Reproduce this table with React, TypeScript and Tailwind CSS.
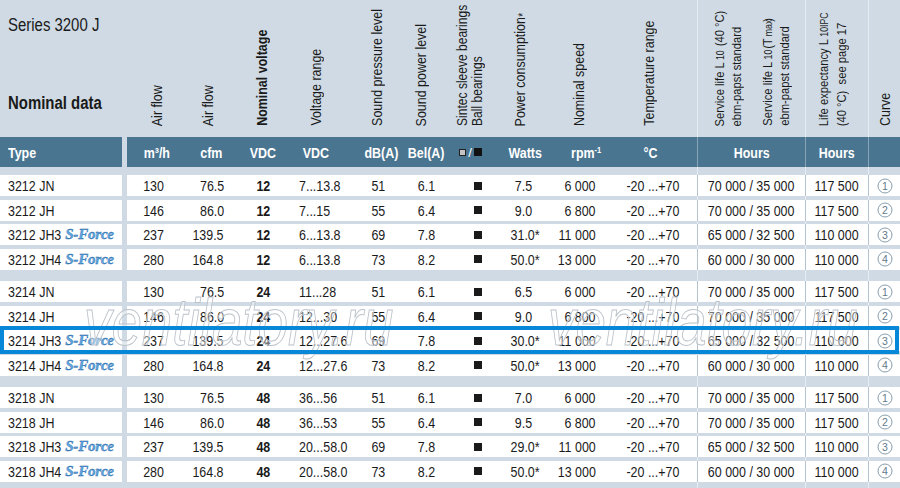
import React from "react";

const COLS =
  "grid grid-cols-[55px_56px_50px_64px_52px_44px_52px_50px_70px_77px_108px_63px_32px]";

type Row = [string, boolean, string, string, string, string, string, string, string, string, string, number];

const groups: { v: string; rows: Row[] }[] = [
  {
    v: "12",
    rows: [
      ["3212 JN", false, "130", "76.5", "7...13.8", "51", "6.1", "7.5", "6 000", "70 000 / 35 000", "117 500", 1],
      ["3212 JH", false, "146", "86.0", "7...15", "55", "6.4", "9.0", "6 800", "70 000 / 35 000", "117 500", 2],
      ["3212 JH3", true, "237", "139.5", "6...13.8", "69", "7.8", "31.0*", "11 000", "65 000 / 32 500", "110 000", 3],
      ["3212 JH4", true, "280", "164.8", "6...13.8", "73", "8.2", "50.0*", "13 000", "60 000 / 30 000", "110 000", 4],
    ],
  },
  {
    v: "24",
    rows: [
      ["3214 JN", false, "130", "76.5", "11...28", "51", "6.1", "6.5", "6 000", "70 000 / 35 000", "117 500", 1],
      ["3214 JH", false, "146", "86.0", "12...30", "55", "6.4", "9.0", "6 800", "70 000 / 35 000", "117 500", 2],
      ["3214 JH3", true, "237", "139.5", "12...27.6", "69", "7.8", "30.0*", "11 000", "65 000 / 32 500", "110 000", 3],
      ["3214 JH4", true, "280", "164.8", "12...27.6", "73", "8.2", "50.0*", "13 000", "60 000 / 30 000", "110 000", 4],
    ],
  },
  {
    v: "48",
    rows: [
      ["3218 JN", false, "130", "76.5", "36...56", "51", "6.1", "7.0", "6 000", "70 000 / 35 000", "117 500", 1],
      ["3218 JH", false, "146", "86.0", "36...53", "55", "6.4", "9.5", "6 800", "70 000 / 35 000", "117 500", 2],
      ["3218 JH3", true, "237", "139.5", "20...58.0", "69", "7.8", "29.0*", "11 000", "65 000 / 32 500", "110 000", 3],
      ["3218 JH4", true, "280", "164.8", "20...58.0", "73", "8.2", "50.0*", "13 000", "60 000 / 30 000", "110 000", 4],
    ],
  },
];

/* condensed text: horizontally squeezed span */
function C({ children, o = "c" }: { children: React.ReactNode; o?: "c" | "l" | "r" }) {
  const origin = o === "l" ? "origin-left" : o === "r" ? "origin-right" : "origin-center";
  return <span className={"inline-block whitespace-nowrap scale-x-[0.83] " + origin}>{children}</span>;
}

function Circled({ n }: { n: number }) {
  return (
    <svg width="16" height="16" viewBox="0 0 16 16">
      <circle cx="8" cy="8" r="7" fill="none" stroke="#7b93a5" strokeWidth="0.9" />
      <text
        x="8"
        y="11.6"
        textAnchor="middle"
        fontSize="10.5"
        fill="#5f7a8e"
        fontFamily="Liberation Sans, sans-serif"
      >
        {n}
      </text>
    </svg>
  );
}

function SForce() {
  return (
    <span className="ml-[-7px] italic font-bold [font-family:'Liberation_Serif',serif] text-[15px] text-[#62a7de] tracking-[-0.2px] [-webkit-text-stroke:0.35px_#1f64a6]">
      S-Force
    </span>
  );
}

/* vertical (bottom-to-top) label, condensed along its reading direction */
function V({ children, className = "" }: { children: React.ReactNode; className?: string }) {
  return (
    <div className="scale-y-[0.83] origin-bottom">
      <div className={"[writing-mode:vertical-rl] rotate-180 whitespace-nowrap " + className}>{children}</div>
    </div>
  );
}

function DataRow({ r, v }: { r: Row; v: string }) {
  const watts = r[7];
  const star = watts.endsWith("*");
  const w = star ? watts.slice(0, -1) : watts;
  return (
    <div className="flex h-[21px]">
      <div className="w-[122px] bg-white flex items-center pl-[8px] whitespace-nowrap">
        <C o="l">{r[0]}</C>
        {r[1] && <SForce />}
      </div>
      <div className="w-[5px]" />
      <div className={COLS + " flex-1 bg-white"}>
        <div className="flex items-center justify-center pr-[2px]"><C>{r[2]}</C></div>
        <div className="flex items-center justify-end pr-[14px]"><C o="r">{r[3]}</C></div>
        <div className="flex items-center justify-center font-bold"><C>{v}</C></div>
        <div className="flex items-center pl-[11px]"><C o="l">{r[4]}</C></div>
        <div className="flex items-center justify-center"><C>{r[5]}</C></div>
        <div className="flex items-center justify-center"><C>{r[6]}</C></div>
        <div className="flex items-center justify-center pl-[8px]">
          <div className="w-[8px] h-[8px] bg-[#1a1a1a]" />
        </div>
        <div className="flex items-center justify-center pr-[3px]">
          <C>
            {w}
            {star && <span className="mr-[-5px]">*</span>}
          </C>
        </div>
        <div className="flex items-center justify-end pr-[24px]"><C o="r">{r[8]}</C></div>
        <div className="flex items-center justify-center pr-[12px]"><C>-20 ...+70</C></div>
        <div className="flex items-center justify-center border-l border-[#b4c3cf]"><C>{r[9]}</C></div>
        <div className="flex items-center justify-center border-l border-[#b4c3cf]"><C>{r[10]}</C></div>
        <div className="flex items-center justify-center border-l border-[#b4c3cf] pl-[1px]">
          <Circled n={r[11]} />
        </div>
      </div>
    </div>
  );
}

export default function App() {
  return (
    <div className="relative w-[900px] h-[488px] overflow-hidden bg-[#cfdae4] bg-[linear-gradient(90deg,transparent_697px,#e6edf2_697px,#e6edf2_698px,transparent_698px,transparent_805px,#e6edf2_805px,#e6edf2_806px,transparent_806px,transparent_868px,#e6edf2_868px,#e6edf2_869px,transparent_869px)] [font-family:'Liberation_Sans',Arial,sans-serif] text-[15px] text-[#1a1a1a] leading-none">
      {/* top heading area */}
      <div className="flex h-[137px]">
        <div className="w-[127px] flex flex-col pl-[8px] pt-[15px]">
          <div className="text-[18px] leading-[20px]"><C o="l">Series 3200 J</C></div>
          <div className="mt-[58px] text-[18px] leading-[20px] font-bold"><C o="l">Nominal data</C></div>
        </div>
        <div className={COLS + " grid-rows-[137px] flex-1 text-[15px] leading-[15px]"}>
          <div className="flex items-end justify-center pb-[11px] pl-[4px]"><V>Air flow</V></div>
          <div className="flex items-end justify-center pb-[11px] pr-[6px]"><V>Air flow</V></div>
          <div className="flex items-end justify-center pb-[11px] pr-[4px]"><V className="font-bold">Nominal voltage</V></div>
          <div className="flex items-end justify-center pb-[11px] pr-[10px]"><V>Voltage range</V></div>
          <div className="flex items-end justify-center pb-[11px] pr-[4px]"><V>Sound pressure level</V></div>
          <div className="flex items-end justify-center pb-[11px] pr-[11px]"><V>Sound power level</V></div>
          <div className="flex items-end justify-center pb-[11px] pr-[9px]">
            <V className="leading-[14.5px] text-[14.5px]">
              Sintec sleeve bearings
              <br />
              Ball bearings
            </V>
          </div>
          <div className="flex items-end justify-center pb-[11px] pr-[10px]">
            <V>
              Power consumption<span className="text-[12px] relative left-[-3px]">*</span>
            </V>
          </div>
          <div className="flex items-end justify-center pb-[11px] pr-[14px]"><V>Nominal speed</V></div>
          <div className="flex items-end justify-center pb-[11px] pr-[20px]"><V>Temperature range</V></div>
          <div className="flex items-end justify-center gap-[14px] pb-[11px] pl-[1px]">
            <V className="leading-[17px] text-[13.5px]">
              Service life L<sub className="text-[10.5px]">10</sub>&nbsp; (40 °C)
              <br />
              ebm-papst standard
            </V>
            <V className="leading-[17px] text-[13.5px]">
              Service life L<sub className="text-[10.5px]">10</sub> (T<sub className="text-[10.5px]">max</sub>)
              <br />
              ebm-papst standard
            </V>
          </div>
          <div className="flex items-end justify-center pb-[11px] pr-[7px]">
            <V className="leading-[18px] text-[13.5px]">
              Life expectancy L<sub className="text-[10.5px]">10IPC</sub>
              <br />
              (40 °C)&nbsp; see page 17
            </V>
          </div>
          <div className="flex items-end justify-center pb-[11px] pl-[1px]"><V>Curve</V></div>
        </div>
      </div>

      {/* dark header band */}
      <div className="flex h-[30px] text-white font-bold text-[15px]">
        <div className="w-[122px] bg-[#4a7590] flex items-center pl-[8px]"><C o="l">Type</C></div>
        <div className="w-[5px]" />
        <div className={COLS + " flex-1 bg-[#4a7590]"}>
          <div className="flex items-center justify-center pl-[5px]"><C>m³/h</C></div>
          <div className="flex items-center justify-center pl-[3px]"><C>cfm</C></div>
          <div className="flex items-center justify-center"><C>VDC</C></div>
          <div className="flex items-center justify-center pr-[8px]"><C>VDC</C></div>
          <div className="flex items-center justify-center pl-[6px]"><C>dB(A)</C></div>
          <div className="flex items-center justify-center"><C>Bel(A)</C></div>
          <div className="flex items-center justify-center pr-[7px] gap-[2px]">
            <div className="w-[7px] h-[7px] bg-[#c4c4c4] border border-[#222]" />
            <span className="text-[13px] font-normal">/</span>
            <div className="w-[8px] h-[8px] bg-[#111]" />
          </div>
          <div className="flex items-center justify-center"><C>Watts</C></div>
          <div className="flex items-center justify-center pl-[2px]">
            <C>
              rpm<sup className="text-[9px]">-1</sup>
            </C>
          </div>
          <div className="flex items-center justify-center pr-[17px]"><C>°C</C></div>
          <div className="flex items-center justify-center border-l border-[#88a4b7]"><C>Hours</C></div>
          <div className="flex items-center justify-center border-l border-[#88a4b7]"><C>Hours</C></div>
          <div className="border-l border-[#88a4b7]" />
        </div>
      </div>

      {/* rows */}
      <div className="mt-[8px] flex flex-col gap-[11.5px]">
        {groups.map((g) => (
          <div key={g.v} className="flex flex-col gap-[3.5px]">
            {g.rows.map((r) => (
              <DataRow key={r[0]} r={r} v={g.v} />
            ))}
          </div>
        ))}
      </div>

      {/* watermark */}
      <div className="pointer-events-none absolute left-[84px] top-[289px] text-[66px] leading-[66px] italic text-white/40 [-webkit-text-stroke:1px_#bcc3ca] whitespace-nowrap">
        <C o="l">ventilatory.ru</C>
      </div>
      <div className="pointer-events-none absolute left-[548px] top-[289px] text-[66px] leading-[66px] italic text-white/40 [-webkit-text-stroke:1px_#bcc3ca] whitespace-nowrap">
        <C o="l">ventilatory.ru</C>
      </div>

      {/* highlighted row frame */}
      <div className="pointer-events-none absolute left-0 top-[326px] w-[899px] h-[28px] border-4 border-[#0787d8]" />
    </div>
  );
}
